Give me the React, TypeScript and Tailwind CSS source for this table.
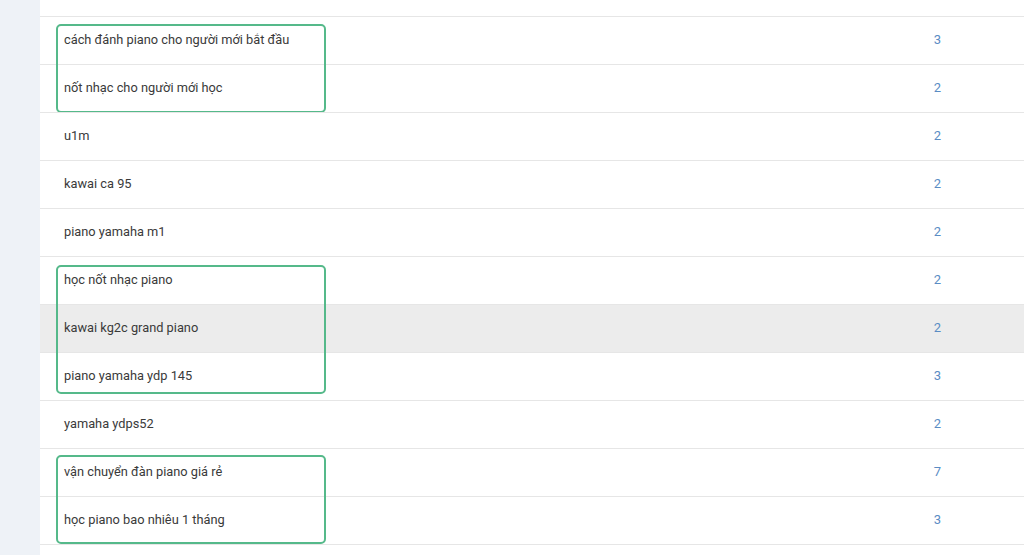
type Row = { q: string; n: number; active?: boolean };

const groups: { rows: Row[]; box?: string }[] = [
  {
    rows: [
      { q: "cách đánh piano cho người mới bắt đầu", n: 3 },
      { q: "nốt nhạc cho người mới học", n: 2 },
    ],
    box: "top-[8px] bottom-[-1px]",
  },
  {
    rows: [
      { q: "u1m", n: 2 },
      { q: "kawai ca 95", n: 2 },
      { q: "piano yamaha m1", n: 2 },
    ],
  },
  {
    rows: [
      { q: "học nốt nhạc piano", n: 2 },
      { q: "kawai kg2c grand piano", n: 2, active: true },
      { q: "piano yamaha ydp 145", n: 3 },
    ],
    box: "top-[9px] bottom-[6px]",
  },
  { rows: [{ q: "yamaha ydps52", n: 2 }] },
  {
    rows: [
      { q: "vận chuyển đàn piano giá rẻ", n: 7 },
      { q: "học piano bao nhiêu 1 tháng", n: 3 },
    ],
    box: "top-[7px] bottom-[0px]",
  },
];

function QueryRow({ row }: { row: Row }) {
  return (
    <div
      className={`flex h-12 items-center border-t border-[#e6e6e6] pb-px ${
        row.active ? "bg-[#ececec]" : "bg-white"
      }`}
    >
      <span className="flex-1 pl-6 text-[12.8px] text-[#3a3a3a]">{row.q}</span>
      <span className="w-[120px] pr-[53px] text-center text-[13px] text-[#5a8cc4]">
        {row.n}
      </span>
    </div>
  );
}

export default function App() {
  return (
    <div
      className="flex h-[555px] w-[1024px] overflow-hidden bg-[#eef2f7]"
      style={{ fontFamily: "Roboto, 'Liberation Sans', sans-serif" }}
    >
      <div className="w-10 shrink-0" />
      <div className="flex-1 bg-white">
        <div className="h-4" />
        {groups.map((g, i) => (
          <div key={i} className="relative">
            {g.rows.map((r) => (
              <QueryRow key={r.q} row={r} />
            ))}
            {g.box && (
              <div
                className={`pointer-events-none absolute left-4 w-[270px] rounded-[5px] border-2 border-[#55b98a] ${g.box}`}
              />
            )}
          </div>
        ))}
        <div className="border-t border-[#e6e6e6]" />
      </div>
    </div>
  );
}
